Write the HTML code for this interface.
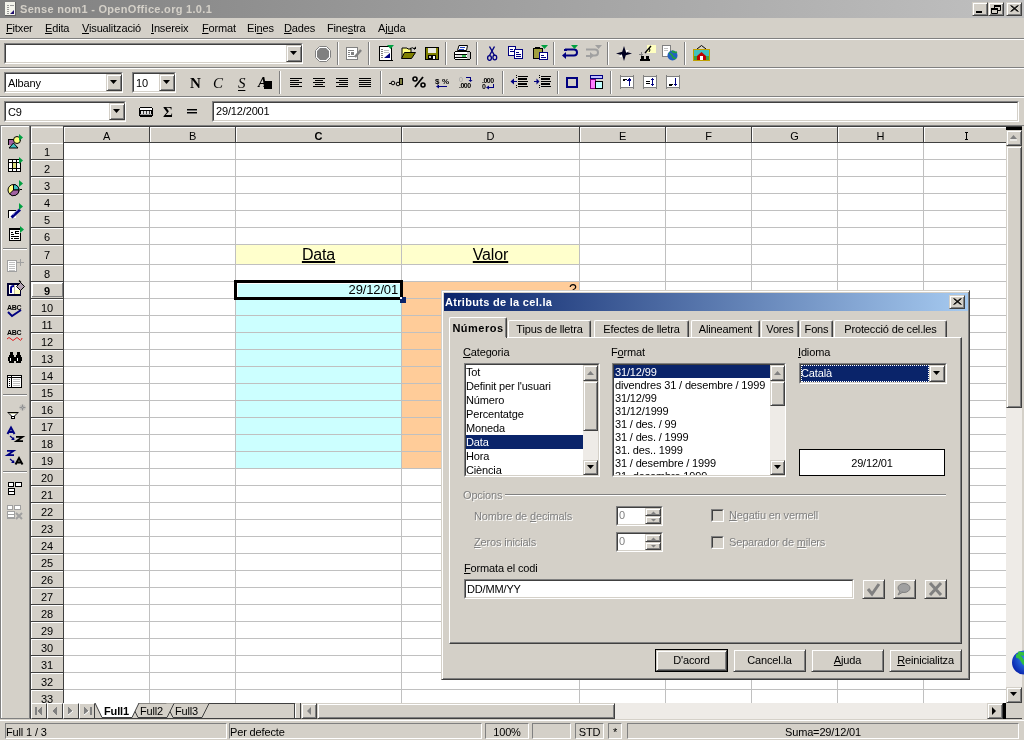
<!DOCTYPE html><html><head><meta charset="utf-8"><style>
*{box-sizing:border-box;margin:0;padding:0}
html,body{width:1024px;height:740px;overflow:hidden;background:#d4d0c8;font-family:"Liberation Sans",sans-serif;font-size:11px;color:#000}
body{position:relative;will-change:transform}
.a{position:absolute}
.t{position:absolute;white-space:nowrap;line-height:13px;letter-spacing:-0.15px}
.ul{text-decoration:underline;text-underline-offset:1px}
.btn{position:absolute;background:#d4d0c8;border-top:1px solid #fff;border-left:1px solid #fff;border-right:1px solid #404040;border-bottom:1px solid #404040;box-shadow:inset -1px -1px 0 #808080}
.btn2{position:absolute;background:#d4d0c8;border-top:1px solid #d4d0c8;border-left:1px solid #d4d0c8;border-right:1px solid #404040;border-bottom:1px solid #404040;box-shadow:inset 1px 1px 0 #fff,inset -1px -1px 0 #808080}
.field{position:absolute;background:#fff;border-top:1px solid #808080;border-left:1px solid #808080;border-right:1px solid #fff;border-bottom:1px solid #fff}
.field>i{position:absolute;left:0;top:0;right:0;bottom:0;border-top:1px solid #404040;border-left:1px solid #404040;border-right:1px solid #d4d0c8;border-bottom:1px solid #d4d0c8}
.tri{position:absolute;width:0;height:0;border-left:4px solid transparent;border-right:4px solid transparent;border-top:4px solid #000}
svg{position:absolute;overflow:visible}
.dis{color:#808080;text-shadow:1px 1px 0 #fff}
</style></head><body><div class="a" style="left:0px;top:0px;width:1024px;height:18px;background:linear-gradient(to right,#808080,#c0c0c0)"></div>
<div class="a" style="left:5px;top:2px;width:11px;height:14px;background:#f4f4ec;border-right:1px solid #606060;border-bottom:1px solid #606060"></div>
<svg style="left:5px;top:2px" width="12" height="15"><g fill="#999"><rect x="2" y="3" width="2" height="1"/><rect x="2" y="5" width="2" height="1"/><rect x="2" y="7" width="2" height="1"/><rect x="2" y="9" width="2" height="1"/><rect x="2" y="11" width="2" height="1"/><rect x="5" y="3" width="4" height="1"/></g><path d="M5 12 L9 8 L9 12Z" fill="#201070"/></svg>
<div class="t" style="left:20px;top:3px;font-weight:bold;color:#d4d0c8;letter-spacing:0.3px">Sense nom1 - OpenOffice.org 1.0.1</div>
<div class="btn2" style="left:972px;top:2px;width:16px;height:14px;"></div>
<div class="btn2" style="left:988px;top:2px;width:16px;height:14px;"></div>
<div class="btn2" style="left:1006px;top:2px;width:16px;height:14px;"></div>
<div class="a" style="left:976px;top:11px;width:6px;height:2px;background:#000"></div>
<svg style="left:988px;top:2px" width="16" height="14"><path d="M6.5 3.5h6v5h-6z M3.5 6.5h6v5h-6z" fill="none" stroke="#000"/><rect x="6" y="3" width="7" height="2" fill="#000"/><rect x="4" y="7" width="5" height="4" fill="#d4d0c8"/><rect x="3" y="6" width="7" height="2" fill="#000"/></svg>
<svg style="left:1006px;top:2px" width="16" height="14"><path d="M4.5 3.5l7 6 M5.5 3.5l7 6 M11.5 3.5l-7 6 M12.5 3.5l-7 6" stroke="#000" stroke-width="1"/></svg>
<div class="t" style="left:6px;top:22px;"><span class="ul">F</span>itxer</div>
<div class="t" style="left:45px;top:22px;"><span class="ul">E</span>dita</div>
<div class="t" style="left:82px;top:22px;"><span class="ul">V</span>isualització</div>
<div class="t" style="left:151px;top:22px;"><span class="ul">I</span>nsereix</div>
<div class="t" style="left:202px;top:22px;"><span class="ul">F</span>ormat</div>
<div class="t" style="left:247px;top:22px;">Ei<span class="ul">n</span>es</div>
<div class="t" style="left:284px;top:22px;"><span class="ul">D</span>ades</div>
<div class="t" style="left:327px;top:22px;">Fine<span class="ul">s</span>tra</div>
<div class="t" style="left:378px;top:22px;">Aj<span class="ul">u</span>da</div>
<div class="a" style="left:0px;top:38px;width:1024px;height:1px;background:#808080"></div>
<div class="a" style="left:0px;top:39px;width:1024px;height:1px;background:#fff"></div>
<div class="field" style="left:4px;top:43px;width:299px;height:21px;background:#fff"><i></i></div>
<div class="btn2" style="left:286px;top:45px;width:16px;height:17px;"></div>
<svg style="left:286px;top:45px" width="16" height="17"><path d="M4 6h7l-3.5 4z" fill="#000"/></svg>
<div class="a" style="left:0px;top:67px;width:1024px;height:1px;background:#808080"></div>
<div class="a" style="left:0px;top:68px;width:1024px;height:1px;background:#fff"></div>
<div class="field" style="left:4px;top:72px;width:119px;height:21px;background:#fff"><i></i></div>
<div class="btn2" style="left:106px;top:74px;width:16px;height:17px;"></div>
<svg style="left:106px;top:74px" width="16" height="17"><path d="M4 6h7l-3.5 4z" fill="#000"/></svg>
<div class="t" style="left:8px;top:77px;">Albany</div>
<div class="field" style="left:132px;top:72px;width:44px;height:21px;background:#fff"><i></i></div>
<div class="btn2" style="left:159px;top:74px;width:16px;height:17px;"></div>
<svg style="left:159px;top:74px" width="16" height="17"><path d="M4 6h7l-3.5 4z" fill="#000"/></svg>
<div class="t" style="left:136px;top:77px;">10</div>
<div class="a" style="left:0px;top:96px;width:1024px;height:1px;background:#808080"></div>
<div class="a" style="left:0px;top:97px;width:1024px;height:1px;background:#fff"></div>
<div class="field" style="left:4px;top:101px;width:122px;height:21px;background:#fff"><i></i></div>
<div class="btn2" style="left:109px;top:103px;width:16px;height:17px;"></div>
<svg style="left:109px;top:103px" width="16" height="17"><path d="M4 6h7l-3.5 4z" fill="#000"/></svg>
<div class="t" style="left:8px;top:106px;">C9</div>
<div class="field" style="left:212px;top:101px;width:807px;height:21px;background:#fff"><i></i></div>
<div class="t" style="left:216px;top:105px;">29/12/2001</div>
<div class="a" style="left:0px;top:125px;width:1024px;height:1px;background:#808080"></div>
<div class="a" style="left:0px;top:126px;width:30px;height:593px;border-left:1px solid #808080;box-shadow:inset 1px 1px 0 #fff;border-right:1px solid #808080;border-bottom:1px solid #808080"></div>
<div class="a" style="left:30px;top:126px;width:976px;height:577px;background:#fff"></div>
<div class="a" style="left:236px;top:245px;width:343px;height:19px;background:#ffffcc"></div>
<div class="a" style="left:236px;top:282px;width:165px;height:186px;background:#ccffff"></div>
<div class="a" style="left:402px;top:282px;width:177px;height:186px;background:#ffcc99"></div>
<div class="a" style="left:64px;top:159px;width:942px;height:1px;background:#c0c0c0"></div>
<div class="a" style="left:64px;top:176px;width:942px;height:1px;background:#c0c0c0"></div>
<div class="a" style="left:64px;top:193px;width:942px;height:1px;background:#c0c0c0"></div>
<div class="a" style="left:64px;top:210px;width:942px;height:1px;background:#c0c0c0"></div>
<div class="a" style="left:64px;top:227px;width:942px;height:1px;background:#c0c0c0"></div>
<div class="a" style="left:64px;top:244px;width:942px;height:1px;background:#c0c0c0"></div>
<div class="a" style="left:64px;top:264px;width:942px;height:1px;background:#c0c0c0"></div>
<div class="a" style="left:64px;top:281px;width:942px;height:1px;background:#c0c0c0"></div>
<div class="a" style="left:64px;top:298px;width:942px;height:1px;background:#c0c0c0"></div>
<div class="a" style="left:64px;top:315px;width:942px;height:1px;background:#c0c0c0"></div>
<div class="a" style="left:64px;top:332px;width:942px;height:1px;background:#c0c0c0"></div>
<div class="a" style="left:64px;top:349px;width:942px;height:1px;background:#c0c0c0"></div>
<div class="a" style="left:64px;top:366px;width:942px;height:1px;background:#c0c0c0"></div>
<div class="a" style="left:64px;top:383px;width:942px;height:1px;background:#c0c0c0"></div>
<div class="a" style="left:64px;top:400px;width:942px;height:1px;background:#c0c0c0"></div>
<div class="a" style="left:64px;top:417px;width:942px;height:1px;background:#c0c0c0"></div>
<div class="a" style="left:64px;top:434px;width:942px;height:1px;background:#c0c0c0"></div>
<div class="a" style="left:64px;top:451px;width:942px;height:1px;background:#c0c0c0"></div>
<div class="a" style="left:64px;top:468px;width:942px;height:1px;background:#c0c0c0"></div>
<div class="a" style="left:64px;top:485px;width:942px;height:1px;background:#c0c0c0"></div>
<div class="a" style="left:64px;top:502px;width:942px;height:1px;background:#c0c0c0"></div>
<div class="a" style="left:64px;top:519px;width:942px;height:1px;background:#c0c0c0"></div>
<div class="a" style="left:64px;top:536px;width:942px;height:1px;background:#c0c0c0"></div>
<div class="a" style="left:64px;top:553px;width:942px;height:1px;background:#c0c0c0"></div>
<div class="a" style="left:64px;top:570px;width:942px;height:1px;background:#c0c0c0"></div>
<div class="a" style="left:64px;top:587px;width:942px;height:1px;background:#c0c0c0"></div>
<div class="a" style="left:64px;top:604px;width:942px;height:1px;background:#c0c0c0"></div>
<div class="a" style="left:64px;top:621px;width:942px;height:1px;background:#c0c0c0"></div>
<div class="a" style="left:64px;top:638px;width:942px;height:1px;background:#c0c0c0"></div>
<div class="a" style="left:64px;top:655px;width:942px;height:1px;background:#c0c0c0"></div>
<div class="a" style="left:64px;top:672px;width:942px;height:1px;background:#c0c0c0"></div>
<div class="a" style="left:64px;top:689px;width:942px;height:1px;background:#c0c0c0"></div>
<div class="a" style="left:149px;top:143px;width:1px;height:560px;background:#c0c0c0"></div>
<div class="a" style="left:235px;top:143px;width:1px;height:560px;background:#c0c0c0"></div>
<div class="a" style="left:401px;top:143px;width:1px;height:560px;background:#c0c0c0"></div>
<div class="a" style="left:579px;top:143px;width:1px;height:560px;background:#c0c0c0"></div>
<div class="a" style="left:665px;top:143px;width:1px;height:560px;background:#c0c0c0"></div>
<div class="a" style="left:751px;top:143px;width:1px;height:560px;background:#c0c0c0"></div>
<div class="a" style="left:837px;top:143px;width:1px;height:560px;background:#c0c0c0"></div>
<div class="a" style="left:923px;top:143px;width:1px;height:560px;background:#c0c0c0"></div>
<div class="a" style="left:30px;top:126px;width:976px;height:17px;background:#d4d0c8"></div>
<div class="a" style="left:30px;top:126px;width:992px;height:1px;background:#404040"></div>
<div class="a" style="left:30px;top:142px;width:976px;height:1px;background:#404040"></div>
<div class="a" style="left:30px;top:126px;width:34px;height:577px;background:#d4d0c8"></div>
<div class="a" style="left:30px;top:126px;width:1px;height:577px;background:#404040"></div>
<div class="a" style="left:63px;top:126px;width:1px;height:577px;background:#404040"></div>
<div class="a" style="left:31px;top:127px;width:32px;height:1px;background:#fff"></div>
<div class="a" style="left:31px;top:127px;width:1px;height:15px;background:#fff"></div>
<div class="a" style="left:64px;top:127px;width:85px;height:1px;background:#fff"></div>
<div class="a" style="left:64px;top:127px;width:1px;height:15px;background:#fff"></div>
<div class="a" style="left:149px;top:126px;width:1px;height:17px;background:#404040"></div>
<div class="t" style="left:64px;top:130px;width:85px;text-align:center">A</div>
<div class="a" style="left:150px;top:127px;width:85px;height:1px;background:#fff"></div>
<div class="a" style="left:150px;top:127px;width:1px;height:15px;background:#fff"></div>
<div class="a" style="left:235px;top:126px;width:1px;height:17px;background:#404040"></div>
<div class="t" style="left:150px;top:130px;width:85px;text-align:center">B</div>
<div class="a" style="left:236px;top:127px;width:165px;height:1px;background:#fff"></div>
<div class="a" style="left:236px;top:127px;width:1px;height:15px;background:#fff"></div>
<div class="a" style="left:401px;top:126px;width:1px;height:17px;background:#404040"></div>
<div class="t" style="left:236px;top:130px;width:165px;text-align:center;font-weight:bold">C</div>
<div class="a" style="left:402px;top:127px;width:177px;height:1px;background:#fff"></div>
<div class="a" style="left:402px;top:127px;width:1px;height:15px;background:#fff"></div>
<div class="a" style="left:579px;top:126px;width:1px;height:17px;background:#404040"></div>
<div class="t" style="left:402px;top:130px;width:177px;text-align:center">D</div>
<div class="a" style="left:580px;top:127px;width:85px;height:1px;background:#fff"></div>
<div class="a" style="left:580px;top:127px;width:1px;height:15px;background:#fff"></div>
<div class="a" style="left:665px;top:126px;width:1px;height:17px;background:#404040"></div>
<div class="t" style="left:580px;top:130px;width:85px;text-align:center">E</div>
<div class="a" style="left:666px;top:127px;width:85px;height:1px;background:#fff"></div>
<div class="a" style="left:666px;top:127px;width:1px;height:15px;background:#fff"></div>
<div class="a" style="left:751px;top:126px;width:1px;height:17px;background:#404040"></div>
<div class="t" style="left:666px;top:130px;width:85px;text-align:center">F</div>
<div class="a" style="left:752px;top:127px;width:85px;height:1px;background:#fff"></div>
<div class="a" style="left:752px;top:127px;width:1px;height:15px;background:#fff"></div>
<div class="a" style="left:837px;top:126px;width:1px;height:17px;background:#404040"></div>
<div class="t" style="left:752px;top:130px;width:85px;text-align:center">G</div>
<div class="a" style="left:838px;top:127px;width:85px;height:1px;background:#fff"></div>
<div class="a" style="left:838px;top:127px;width:1px;height:15px;background:#fff"></div>
<div class="a" style="left:923px;top:126px;width:1px;height:17px;background:#404040"></div>
<div class="t" style="left:838px;top:130px;width:85px;text-align:center">H</div>
<div class="a" style="left:924px;top:127px;width:82px;height:1px;background:#fff"></div>
<div class="a" style="left:924px;top:127px;width:1px;height:15px;background:#fff"></div>
<div class="a" style="left:965px;top:132px;width:3px;height:1px;background:#000"></div>
<div class="a" style="left:966px;top:133px;width:1px;height:6px;background:#000"></div>
<div class="a" style="left:965px;top:139px;width:3px;height:1px;background:#000"></div>
<div class="a" style="left:31px;top:143px;width:32px;height:1px;background:#fff"></div>
<div class="a" style="left:31px;top:143px;width:1px;height:16px;background:#fff"></div>
<div class="a" style="left:30px;top:159px;width:34px;height:1px;background:#404040"></div>
<div class="t" style="left:31px;top:146px;width:32px;text-align:center">1</div>
<div class="a" style="left:31px;top:160px;width:32px;height:1px;background:#fff"></div>
<div class="a" style="left:31px;top:160px;width:1px;height:16px;background:#fff"></div>
<div class="a" style="left:30px;top:176px;width:34px;height:1px;background:#404040"></div>
<div class="t" style="left:31px;top:163px;width:32px;text-align:center">2</div>
<div class="a" style="left:31px;top:177px;width:32px;height:1px;background:#fff"></div>
<div class="a" style="left:31px;top:177px;width:1px;height:16px;background:#fff"></div>
<div class="a" style="left:30px;top:193px;width:34px;height:1px;background:#404040"></div>
<div class="t" style="left:31px;top:180px;width:32px;text-align:center">3</div>
<div class="a" style="left:31px;top:194px;width:32px;height:1px;background:#fff"></div>
<div class="a" style="left:31px;top:194px;width:1px;height:16px;background:#fff"></div>
<div class="a" style="left:30px;top:210px;width:34px;height:1px;background:#404040"></div>
<div class="t" style="left:31px;top:197px;width:32px;text-align:center">4</div>
<div class="a" style="left:31px;top:211px;width:32px;height:1px;background:#fff"></div>
<div class="a" style="left:31px;top:211px;width:1px;height:16px;background:#fff"></div>
<div class="a" style="left:30px;top:227px;width:34px;height:1px;background:#404040"></div>
<div class="t" style="left:31px;top:214px;width:32px;text-align:center">5</div>
<div class="a" style="left:31px;top:228px;width:32px;height:1px;background:#fff"></div>
<div class="a" style="left:31px;top:228px;width:1px;height:16px;background:#fff"></div>
<div class="a" style="left:30px;top:244px;width:34px;height:1px;background:#404040"></div>
<div class="t" style="left:31px;top:231px;width:32px;text-align:center">6</div>
<div class="a" style="left:31px;top:245px;width:32px;height:1px;background:#fff"></div>
<div class="a" style="left:31px;top:245px;width:1px;height:19px;background:#fff"></div>
<div class="a" style="left:30px;top:264px;width:34px;height:1px;background:#404040"></div>
<div class="t" style="left:31px;top:249px;width:32px;text-align:center">7</div>
<div class="a" style="left:31px;top:265px;width:32px;height:1px;background:#fff"></div>
<div class="a" style="left:31px;top:265px;width:1px;height:16px;background:#fff"></div>
<div class="a" style="left:30px;top:281px;width:34px;height:1px;background:#404040"></div>
<div class="t" style="left:31px;top:268px;width:32px;text-align:center">8</div>
<div class="a" style="left:31px;top:282px;width:32px;height:1px;background:#fff"></div>
<div class="a" style="left:31px;top:282px;width:1px;height:16px;background:#fff"></div>
<div class="a" style="left:30px;top:298px;width:34px;height:1px;background:#404040"></div>
<div class="t" style="left:31px;top:285px;width:32px;text-align:center;font-weight:bold">9</div>
<div class="a" style="left:31px;top:299px;width:32px;height:1px;background:#fff"></div>
<div class="a" style="left:31px;top:299px;width:1px;height:16px;background:#fff"></div>
<div class="a" style="left:30px;top:315px;width:34px;height:1px;background:#404040"></div>
<div class="t" style="left:31px;top:302px;width:32px;text-align:center">10</div>
<div class="a" style="left:31px;top:316px;width:32px;height:1px;background:#fff"></div>
<div class="a" style="left:31px;top:316px;width:1px;height:16px;background:#fff"></div>
<div class="a" style="left:30px;top:332px;width:34px;height:1px;background:#404040"></div>
<div class="t" style="left:31px;top:319px;width:32px;text-align:center">11</div>
<div class="a" style="left:31px;top:333px;width:32px;height:1px;background:#fff"></div>
<div class="a" style="left:31px;top:333px;width:1px;height:16px;background:#fff"></div>
<div class="a" style="left:30px;top:349px;width:34px;height:1px;background:#404040"></div>
<div class="t" style="left:31px;top:336px;width:32px;text-align:center">12</div>
<div class="a" style="left:31px;top:350px;width:32px;height:1px;background:#fff"></div>
<div class="a" style="left:31px;top:350px;width:1px;height:16px;background:#fff"></div>
<div class="a" style="left:30px;top:366px;width:34px;height:1px;background:#404040"></div>
<div class="t" style="left:31px;top:353px;width:32px;text-align:center">13</div>
<div class="a" style="left:31px;top:367px;width:32px;height:1px;background:#fff"></div>
<div class="a" style="left:31px;top:367px;width:1px;height:16px;background:#fff"></div>
<div class="a" style="left:30px;top:383px;width:34px;height:1px;background:#404040"></div>
<div class="t" style="left:31px;top:370px;width:32px;text-align:center">14</div>
<div class="a" style="left:31px;top:384px;width:32px;height:1px;background:#fff"></div>
<div class="a" style="left:31px;top:384px;width:1px;height:16px;background:#fff"></div>
<div class="a" style="left:30px;top:400px;width:34px;height:1px;background:#404040"></div>
<div class="t" style="left:31px;top:387px;width:32px;text-align:center">15</div>
<div class="a" style="left:31px;top:401px;width:32px;height:1px;background:#fff"></div>
<div class="a" style="left:31px;top:401px;width:1px;height:16px;background:#fff"></div>
<div class="a" style="left:30px;top:417px;width:34px;height:1px;background:#404040"></div>
<div class="t" style="left:31px;top:404px;width:32px;text-align:center">16</div>
<div class="a" style="left:31px;top:418px;width:32px;height:1px;background:#fff"></div>
<div class="a" style="left:31px;top:418px;width:1px;height:16px;background:#fff"></div>
<div class="a" style="left:30px;top:434px;width:34px;height:1px;background:#404040"></div>
<div class="t" style="left:31px;top:421px;width:32px;text-align:center">17</div>
<div class="a" style="left:31px;top:435px;width:32px;height:1px;background:#fff"></div>
<div class="a" style="left:31px;top:435px;width:1px;height:16px;background:#fff"></div>
<div class="a" style="left:30px;top:451px;width:34px;height:1px;background:#404040"></div>
<div class="t" style="left:31px;top:438px;width:32px;text-align:center">18</div>
<div class="a" style="left:31px;top:452px;width:32px;height:1px;background:#fff"></div>
<div class="a" style="left:31px;top:452px;width:1px;height:16px;background:#fff"></div>
<div class="a" style="left:30px;top:468px;width:34px;height:1px;background:#404040"></div>
<div class="t" style="left:31px;top:455px;width:32px;text-align:center">19</div>
<div class="a" style="left:31px;top:469px;width:32px;height:1px;background:#fff"></div>
<div class="a" style="left:31px;top:469px;width:1px;height:16px;background:#fff"></div>
<div class="a" style="left:30px;top:485px;width:34px;height:1px;background:#404040"></div>
<div class="t" style="left:31px;top:472px;width:32px;text-align:center">20</div>
<div class="a" style="left:31px;top:486px;width:32px;height:1px;background:#fff"></div>
<div class="a" style="left:31px;top:486px;width:1px;height:16px;background:#fff"></div>
<div class="a" style="left:30px;top:502px;width:34px;height:1px;background:#404040"></div>
<div class="t" style="left:31px;top:489px;width:32px;text-align:center">21</div>
<div class="a" style="left:31px;top:503px;width:32px;height:1px;background:#fff"></div>
<div class="a" style="left:31px;top:503px;width:1px;height:16px;background:#fff"></div>
<div class="a" style="left:30px;top:519px;width:34px;height:1px;background:#404040"></div>
<div class="t" style="left:31px;top:506px;width:32px;text-align:center">22</div>
<div class="a" style="left:31px;top:520px;width:32px;height:1px;background:#fff"></div>
<div class="a" style="left:31px;top:520px;width:1px;height:16px;background:#fff"></div>
<div class="a" style="left:30px;top:536px;width:34px;height:1px;background:#404040"></div>
<div class="t" style="left:31px;top:523px;width:32px;text-align:center">23</div>
<div class="a" style="left:31px;top:537px;width:32px;height:1px;background:#fff"></div>
<div class="a" style="left:31px;top:537px;width:1px;height:16px;background:#fff"></div>
<div class="a" style="left:30px;top:553px;width:34px;height:1px;background:#404040"></div>
<div class="t" style="left:31px;top:540px;width:32px;text-align:center">24</div>
<div class="a" style="left:31px;top:554px;width:32px;height:1px;background:#fff"></div>
<div class="a" style="left:31px;top:554px;width:1px;height:16px;background:#fff"></div>
<div class="a" style="left:30px;top:570px;width:34px;height:1px;background:#404040"></div>
<div class="t" style="left:31px;top:557px;width:32px;text-align:center">25</div>
<div class="a" style="left:31px;top:571px;width:32px;height:1px;background:#fff"></div>
<div class="a" style="left:31px;top:571px;width:1px;height:16px;background:#fff"></div>
<div class="a" style="left:30px;top:587px;width:34px;height:1px;background:#404040"></div>
<div class="t" style="left:31px;top:574px;width:32px;text-align:center">26</div>
<div class="a" style="left:31px;top:588px;width:32px;height:1px;background:#fff"></div>
<div class="a" style="left:31px;top:588px;width:1px;height:16px;background:#fff"></div>
<div class="a" style="left:30px;top:604px;width:34px;height:1px;background:#404040"></div>
<div class="t" style="left:31px;top:591px;width:32px;text-align:center">27</div>
<div class="a" style="left:31px;top:605px;width:32px;height:1px;background:#fff"></div>
<div class="a" style="left:31px;top:605px;width:1px;height:16px;background:#fff"></div>
<div class="a" style="left:30px;top:621px;width:34px;height:1px;background:#404040"></div>
<div class="t" style="left:31px;top:608px;width:32px;text-align:center">28</div>
<div class="a" style="left:31px;top:622px;width:32px;height:1px;background:#fff"></div>
<div class="a" style="left:31px;top:622px;width:1px;height:16px;background:#fff"></div>
<div class="a" style="left:30px;top:638px;width:34px;height:1px;background:#404040"></div>
<div class="t" style="left:31px;top:625px;width:32px;text-align:center">29</div>
<div class="a" style="left:31px;top:639px;width:32px;height:1px;background:#fff"></div>
<div class="a" style="left:31px;top:639px;width:1px;height:16px;background:#fff"></div>
<div class="a" style="left:30px;top:655px;width:34px;height:1px;background:#404040"></div>
<div class="t" style="left:31px;top:642px;width:32px;text-align:center">30</div>
<div class="a" style="left:31px;top:656px;width:32px;height:1px;background:#fff"></div>
<div class="a" style="left:31px;top:656px;width:1px;height:16px;background:#fff"></div>
<div class="a" style="left:30px;top:672px;width:34px;height:1px;background:#404040"></div>
<div class="t" style="left:31px;top:659px;width:32px;text-align:center">31</div>
<div class="a" style="left:31px;top:673px;width:32px;height:1px;background:#fff"></div>
<div class="a" style="left:31px;top:673px;width:1px;height:16px;background:#fff"></div>
<div class="a" style="left:30px;top:689px;width:34px;height:1px;background:#404040"></div>
<div class="t" style="left:31px;top:676px;width:32px;text-align:center">32</div>
<div class="a" style="left:31px;top:690px;width:32px;height:1px;background:#fff"></div>
<div class="a" style="left:31px;top:690px;width:1px;height:13px;background:#fff"></div>
<div class="t" style="left:31px;top:693px;width:32px;text-align:center">33</div>
<div class="a" style="left:32px;top:283px;width:30px;height:1px;background:#fff"></div>
<div class="a" style="left:32px;top:283px;width:1px;height:14px;background:#fff"></div>
<div class="a" style="left:32px;top:296px;width:30px;height:1px;background:#808080"></div>
<div class="a" style="left:62px;top:283px;width:1px;height:14px;background:#808080"></div>
<div class="t" style="left:236px;top:247px;width:165px;text-align:center;font-size:16px;line-height:16px"><span style="text-decoration:underline;text-decoration-thickness:2px;text-underline-offset:1px">Data</span></div>
<div class="t" style="left:402px;top:247px;width:177px;text-align:center;font-size:16px;line-height:16px"><span style="text-decoration:underline;text-decoration-thickness:2px;text-underline-offset:1px">Valor</span></div>
<div class="t" style="left:237px;top:282px;width:161px;text-align:right;font-size:13px;line-height:15px">29/12/01</div>
<div class="t" style="left:569px;top:282px;font-size:14px;line-height:15px">?</div>
<div class="a" style="left:234px;top:280px;width:169px;height:20px;border:3px solid #000;box-shadow:inset 1px 1px 0 #fff"></div>
<div class="a" style="left:400px;top:297px;width:6px;height:6px;background:#0a246a"></div>
<div class="a" style="left:400px;top:297px;width:2px;height:2px;background:#fff"></div>
<div class="a" style="left:1006px;top:126px;width:16px;height:577px;background:#eeebe7"></div>
<div class="a" style="left:1006px;top:126px;width:16px;height:1px;background:#404040"></div>
<div class="a" style="left:1006px;top:127px;width:16px;height:3px;background:#000"></div>
<div class="btn2" style="left:1006px;top:130px;width:16px;height:16px;"></div>
<svg style="left:1006px;top:130px" width="16" height="16"><path d="M4 9h7l-3.5-4z" fill="#808080"/><path d="M4 10h7" stroke="#fff"/></svg>
<div class="btn2" style="left:1006px;top:146px;width:16px;height:262px;"></div>
<div class="btn2" style="left:1006px;top:687px;width:16px;height:16px;"></div>
<svg style="left:1006px;top:687px" width="16" height="16"><path d="M4 5h7l-3.5 4z" fill="#000"/></svg>
<div class="a" style="left:30px;top:703px;width:992px;height:16px;background:#d4d0c8"></div>
<div class="a" style="left:30px;top:703px;width:265px;height:1px;background:#404040"></div>
<div class="a" style="left:30px;top:718px;width:992px;height:1px;background:#404040"></div>
<div class="a" style="left:31px;top:703px;width:16px;height:16px;background:#d4d0c8;border-top:1px solid #fff;border-left:1px solid #fff;border-right:1px solid #404040;border-bottom:1px solid #404040"></div>
<div class="a" style="left:47px;top:703px;width:16px;height:16px;background:#d4d0c8;border-top:1px solid #fff;border-left:1px solid #fff;border-right:1px solid #404040;border-bottom:1px solid #404040"></div>
<div class="a" style="left:63px;top:703px;width:16px;height:16px;background:#d4d0c8;border-top:1px solid #fff;border-left:1px solid #fff;border-right:1px solid #404040;border-bottom:1px solid #404040"></div>
<div class="a" style="left:79px;top:703px;width:16px;height:16px;background:#d4d0c8;border-top:1px solid #fff;border-left:1px solid #fff;border-right:1px solid #404040;border-bottom:1px solid #404040"></div>
<div class="a" style="left:30px;top:703px;width:1px;height:16px;background:#404040"></div>
<div class="a" style="left:294px;top:703px;width:1px;height:16px;background:#404040"></div>
<div class="a" style="left:295px;top:704px;width:1px;height:14px;background:#fff"></div>
<div class="a" style="left:300px;top:703px;width:1px;height:16px;background:#404040"></div>
<div class="btn2" style="left:301px;top:703px;width:16px;height:16px;"></div>
<div class="a" style="left:317px;top:703px;width:686px;height:16px;background:#eeebe7"></div>
<div class="btn2" style="left:317px;top:703px;width:298px;height:16px;"></div>
<div class="btn2" style="left:987px;top:703px;width:16px;height:16px;"></div>
<svg style="left:987px;top:703px" width="16" height="16"><path d="M5 4v8l4-4z" fill="#000"/></svg>
<div class="btn2" style="left:301px;top:703px;width:16px;height:16px;"></div>
<svg style="left:301px;top:703px" width="16" height="16"><path d="M10 4v8l-4-4z" fill="#808080"/></svg>
<div class="a" style="left:1003px;top:703px;width:3px;height:16px;background:#000"></div>
<div class="a" style="left:0px;top:720px;width:1024px;height:1px;background:#fff"></div>
<div class="a" style="left:5px;top:723px;width:222px;height:16px;border-top:1px solid #808080;border-left:1px solid #808080;border-right:1px solid #fff;border-bottom:1px solid #fff"></div>
<div class="t" style="left:6px;top:726px;width:220px;text-align:left">Full 1 / 3</div>
<div class="a" style="left:229px;top:723px;width:253px;height:16px;border-top:1px solid #808080;border-left:1px solid #808080;border-right:1px solid #fff;border-bottom:1px solid #fff"></div>
<div class="t" style="left:230px;top:726px;width:251px;text-align:left">Per defecte</div>
<div class="a" style="left:485px;top:723px;width:44px;height:16px;border-top:1px solid #808080;border-left:1px solid #808080;border-right:1px solid #fff;border-bottom:1px solid #fff"></div>
<div class="t" style="left:486px;top:726px;width:42px;text-align:center">100%</div>
<div class="a" style="left:532px;top:723px;width:39px;height:16px;border-top:1px solid #808080;border-left:1px solid #808080;border-right:1px solid #fff;border-bottom:1px solid #fff"></div>
<div class="a" style="left:575px;top:723px;width:29px;height:16px;border-top:1px solid #808080;border-left:1px solid #808080;border-right:1px solid #fff;border-bottom:1px solid #fff"></div>
<div class="t" style="left:576px;top:726px;width:27px;text-align:center">STD</div>
<div class="a" style="left:608px;top:723px;width:14px;height:16px;border-top:1px solid #808080;border-left:1px solid #808080;border-right:1px solid #fff;border-bottom:1px solid #fff"></div>
<div class="t" style="left:609px;top:726px;width:12px;text-align:center">*</div>
<div class="a" style="left:627px;top:723px;width:392px;height:16px;border-top:1px solid #808080;border-left:1px solid #808080;border-right:1px solid #fff;border-bottom:1px solid #fff"></div>
<div class="t" style="left:628px;top:726px;width:390px;text-align:center">Suma=29/12/01</div>
<div class="a" style="left:441px;top:290px;width:529px;height:390px;background:#d4d0c8;border-top:1px solid #d4d0c8;border-left:1px solid #d4d0c8;border-right:1px solid #404040;border-bottom:1px solid #404040;box-shadow:inset 1px 1px 0 #fff,inset -1px -1px 0 #808080"></div>
<div class="a" style="left:444px;top:293px;width:524px;height:18px;background:linear-gradient(to right,#0a246a,#a6caf0)"></div>
<div class="t" style="left:445px;top:296px;font-weight:bold;color:#fff;letter-spacing:0.3px">Atributs de la cel.la</div>
<div class="btn2" style="left:949px;top:295px;width:16px;height:14px;"></div>
<svg style="left:949px;top:295px" width="16" height="14"><path d="M4.5 3.5l7 6 M5.5 3.5l7 6 M11.5 3.5l-7 6 M12.5 3.5l-7 6" stroke="#000" stroke-width="1"/></svg>
<div class="a" style="left:449px;top:337px;width:513px;height:307px;border-top:1px solid #fff;border-left:1px solid #fff;border-right:1px solid #404040;border-bottom:1px solid #404040;box-shadow:inset -1px -1px 0 #808080"></div>
<div class="a" style="left:508px;top:320px;width:83px;height:17px;background:#d4d0c8;border-top:1px solid #fff;border-left:1px solid #fff;border-right:1px solid #404040;box-shadow:inset -1px 0 0 #808080;border-top-left-radius:2px;border-top-right-radius:2px"></div>
<div class="t" style="left:509px;top:323px;width:81px;text-align:center;">Tipus de lletra</div>
<div class="a" style="left:594px;top:320px;width:95px;height:17px;background:#d4d0c8;border-top:1px solid #fff;border-left:1px solid #fff;border-right:1px solid #404040;box-shadow:inset -1px 0 0 #808080;border-top-left-radius:2px;border-top-right-radius:2px"></div>
<div class="t" style="left:595px;top:323px;width:93px;text-align:center;">Efectes de lletra</div>
<div class="a" style="left:691px;top:320px;width:69px;height:17px;background:#d4d0c8;border-top:1px solid #fff;border-left:1px solid #fff;border-right:1px solid #404040;box-shadow:inset -1px 0 0 #808080;border-top-left-radius:2px;border-top-right-radius:2px"></div>
<div class="t" style="left:692px;top:323px;width:67px;text-align:center;">Alineament</div>
<div class="a" style="left:761px;top:320px;width:38px;height:17px;background:#d4d0c8;border-top:1px solid #fff;border-left:1px solid #fff;border-right:1px solid #404040;box-shadow:inset -1px 0 0 #808080;border-top-left-radius:2px;border-top-right-radius:2px"></div>
<div class="t" style="left:762px;top:323px;width:36px;text-align:center;">Vores</div>
<div class="a" style="left:800px;top:320px;width:33px;height:17px;background:#d4d0c8;border-top:1px solid #fff;border-left:1px solid #fff;border-right:1px solid #404040;box-shadow:inset -1px 0 0 #808080;border-top-left-radius:2px;border-top-right-radius:2px"></div>
<div class="t" style="left:801px;top:323px;width:31px;text-align:center;">Fons</div>
<div class="a" style="left:834px;top:320px;width:113px;height:17px;background:#d4d0c8;border-top:1px solid #fff;border-left:1px solid #fff;border-right:1px solid #404040;box-shadow:inset -1px 0 0 #808080;border-top-left-radius:2px;border-top-right-radius:2px"></div>
<div class="t" style="left:835px;top:323px;width:111px;text-align:center;">Protecció de cel.les</div>
<div class="a" style="left:449px;top:317px;width:58px;height:21px;background:#d4d0c8;border-top:1px solid #fff;border-left:1px solid #fff;border-right:1px solid #404040;box-shadow:inset -1px 0 0 #808080;border-top-left-radius:2px;border-top-right-radius:2px"></div>
<div class="a" style="left:450px;top:337px;width:56px;height:1px;background:#d4d0c8"></div>
<div class="t" style="left:450px;top:322px;width:56px;text-align:center;font-weight:bold;letter-spacing:0.5px">Números</div>
<div class="t" style="left:463px;top:346px;"><span class="ul">C</span>ategoria</div>
<div class="t" style="left:611px;top:346px;">F<span class="ul">o</span>rmat</div>
<div class="t" style="left:798px;top:346px;"><span class="ul">I</span>dioma</div>
<div class="field" style="left:464px;top:363px;width:136px;height:114px;background:#fff"><i></i></div>
<div class="t" style="left:466px;top:366px;">Tot</div>
<div class="t" style="left:466px;top:380px;">Definit per l'usuari</div>
<div class="t" style="left:466px;top:394px;">Número</div>
<div class="t" style="left:466px;top:408px;">Percentatge</div>
<div class="t" style="left:466px;top:422px;">Moneda</div>
<div class="a" style="left:466px;top:435px;width:117px;height:14px;background:#0a246a"></div>
<div class="t" style="left:466px;top:436px;color:#fff">Data</div>
<div class="t" style="left:466px;top:450px;">Hora</div>
<div class="t" style="left:466px;top:464px;">Ciència</div>
<div class="a" style="left:583px;top:365px;width:15px;height:110px;background:#eeebe7"></div>
<div class="btn2" style="left:583px;top:365px;width:15px;height:16px;"></div>
<svg style="left:583px;top:365px" width="15" height="16"><path d="M4 10h7l-3.5-4z" fill="#808080"/></svg>
<div class="btn2" style="left:583px;top:381px;width:15px;height:50px;"></div>
<div class="btn2" style="left:583px;top:460px;width:15px;height:15px;"></div>
<svg style="left:583px;top:460px" width="15" height="15"><path d="M4 5h7l-3.5 4z" fill="#000"/></svg>
<div class="field" style="left:612px;top:363px;width:174px;height:114px;background:#fff"><i></i></div>
<div class="a" style="left:614px;top:365px;width:156px;height:110px;overflow:hidden">
<div class="a" style="left:0px;top:0px;width:156px;height:13px;background:#0a246a"></div>
<div class="t" style="left:1px;top:1px;color:#fff">31/12/99</div>
<div class="t" style="left:1px;top:14px;">divendres 31 / desembre / 1999</div>
<div class="t" style="left:1px;top:27px;">31/12/99</div>
<div class="t" style="left:1px;top:40px;">31/12/1999</div>
<div class="t" style="left:1px;top:53px;">31 / des. / 99</div>
<div class="t" style="left:1px;top:66px;">31 / des. / 1999</div>
<div class="t" style="left:1px;top:79px;">31. des.. 1999</div>
<div class="t" style="left:1px;top:92px;">31 / desembre / 1999</div>
<div class="t" style="left:1px;top:105px;">31. desembre 1999</div>
</div>
<div class="a" style="left:770px;top:365px;width:15px;height:110px;background:#eeebe7"></div>
<div class="btn2" style="left:770px;top:365px;width:15px;height:16px;"></div>
<svg style="left:770px;top:365px" width="15" height="16"><path d="M4 10h7l-3.5-4z" fill="#808080"/></svg>
<div class="btn2" style="left:770px;top:381px;width:15px;height:25px;"></div>
<div class="btn2" style="left:770px;top:460px;width:15px;height:15px;"></div>
<svg style="left:770px;top:460px" width="15" height="15"><path d="M4 5h7l-3.5 4z" fill="#000"/></svg>
<div class="field" style="left:799px;top:363px;width:148px;height:21px;background:#fff"><i></i></div>
<div class="a" style="left:801px;top:365px;width:128px;height:17px;background:#0a246a;outline:1px dotted #fff;outline-offset:-1px"></div>
<div class="t" style="left:801px;top:367px;color:#fff">Català</div>
<div class="btn2" style="left:929px;top:365px;width:16px;height:17px;"></div>
<svg style="left:929px;top:365px" width="16" height="17"><path d="M4 6h7l-3.5 4z" fill="#000"/></svg>
<div class="a" style="left:799px;top:449px;width:146px;height:27px;background:#fff;border:1px solid #000"></div>
<div class="t" style="left:800px;top:457px;width:144px;text-align:center">29/12/01</div>
<div class="t" style="left:463px;top:489px;color:#808080;text-shadow:1px 1px 0 #fff">Opcions</div>
<div class="a" style="left:505px;top:494px;width:441px;height:1px;background:#808080"></div>
<div class="a" style="left:505px;top:495px;width:441px;height:1px;background:#fff"></div>
<div class="t" style="left:474px;top:510px;color:#808080;text-shadow:1px 1px 0 #fff">Nombre de <span class="ul">d</span>ecimals</div>
<div class="t" style="left:474px;top:536px;color:#808080;text-shadow:1px 1px 0 #fff"><span class="ul">Z</span>eros inicials</div>
<div class="field" style="left:616px;top:506px;width:47px;height:20px;background:#fff"><i></i></div>
<div class="t" style="left:619px;top:509px;color:#808080">0</div>
<div class="btn2" style="left:645px;top:508px;width:16px;height:8px;"></div>
<div class="btn2" style="left:645px;top:516px;width:16px;height:8px;"></div>
<svg style="left:645px;top:508px" width="16" height="16"><path d="M6 6h5l-2.5-2.5z M6 11h5l-2.5 2.5z" fill="#808080"/></svg>
<div class="field" style="left:616px;top:532px;width:47px;height:20px;background:#fff"><i></i></div>
<div class="t" style="left:619px;top:535px;color:#808080">0</div>
<div class="btn2" style="left:645px;top:534px;width:16px;height:8px;"></div>
<div class="btn2" style="left:645px;top:542px;width:16px;height:8px;"></div>
<svg style="left:645px;top:534px" width="16" height="16"><path d="M6 6h5l-2.5-2.5z M6 11h5l-2.5 2.5z" fill="#808080"/></svg>
<div class="field" style="left:711px;top:509px;width:13px;height:13px;background:#d4d0c8"><i></i></div>
<div class="t" style="left:729px;top:509px;color:#808080;text-shadow:1px 1px 0 #fff"><span class="ul">N</span>egatiu en vermell</div>
<div class="field" style="left:711px;top:536px;width:13px;height:13px;background:#d4d0c8"><i></i></div>
<div class="t" style="left:729px;top:536px;color:#808080;text-shadow:1px 1px 0 #fff">Separador de <span class="ul">m</span>ilers</div>
<div class="t" style="left:464px;top:562px;"><span class="ul">F</span>ormata el codi</div>
<div class="field" style="left:464px;top:579px;width:390px;height:20px;background:#fff"><i></i></div>
<div class="t" style="left:467px;top:583px;">DD/MM/YY</div>
<div class="btn2" style="left:862px;top:579px;width:23px;height:20px;"></div>
<div class="btn2" style="left:893px;top:579px;width:23px;height:20px;"></div>
<div class="btn2" style="left:924px;top:579px;width:23px;height:20px;"></div>
<svg style="left:862px;top:579px" width="23" height="20"><path d="M6 10l4 5 7-10" stroke="#808080" stroke-width="3" fill="none"/></svg>
<svg style="left:893px;top:579px" width="23" height="20"><ellipse cx="11" cy="9" rx="6" ry="4.5" fill="#a0a0a0" stroke="#808080"/><path d="M7 12l-2 4 5-3" fill="#a0a0a0" stroke="#808080"/></svg>
<svg style="left:924px;top:579px" width="23" height="20"><path d="M6 4l11 12 M17 4l-11 12" stroke="#808080" stroke-width="3"/></svg>
<div class="a" style="left:655px;top:649px;width:73px;height:23px;border:1px solid #000"></div>
<div class="btn2" style="left:656px;top:650px;width:71px;height:21px;"></div>
<div class="t" style="left:657px;top:654px;width:69px;text-align:center">D'acord</div>
<div class="btn2" style="left:733px;top:649px;width:73px;height:23px;"></div>
<div class="t" style="left:734px;top:654px;width:71px;text-align:center">Cancel.la</div>
<div class="btn2" style="left:811px;top:649px;width:73px;height:23px;"></div>
<div class="t" style="left:812px;top:654px;width:71px;text-align:center"><span class="ul">A</span>juda</div>
<div class="btn2" style="left:889px;top:649px;width:73px;height:23px;"></div>
<div class="t" style="left:890px;top:654px;width:71px;text-align:center"><span class="ul">R</span>einicialitza</div>
<div class="a" style="left:337px;top:42px;width:1px;height:23px;background:#808080"></div>
<div class="a" style="left:338px;top:42px;width:1px;height:23px;background:#fff"></div>
<div class="a" style="left:368px;top:42px;width:1px;height:23px;background:#808080"></div>
<div class="a" style="left:369px;top:42px;width:1px;height:23px;background:#fff"></div>
<div class="a" style="left:445px;top:42px;width:1px;height:23px;background:#808080"></div>
<div class="a" style="left:446px;top:42px;width:1px;height:23px;background:#fff"></div>
<div class="a" style="left:476px;top:42px;width:1px;height:23px;background:#808080"></div>
<div class="a" style="left:477px;top:42px;width:1px;height:23px;background:#fff"></div>
<div class="a" style="left:553px;top:42px;width:1px;height:23px;background:#808080"></div>
<div class="a" style="left:554px;top:42px;width:1px;height:23px;background:#fff"></div>
<div class="a" style="left:607px;top:42px;width:1px;height:23px;background:#808080"></div>
<div class="a" style="left:608px;top:42px;width:1px;height:23px;background:#fff"></div>
<div class="a" style="left:684px;top:42px;width:1px;height:23px;background:#808080"></div>
<div class="a" style="left:685px;top:42px;width:1px;height:23px;background:#fff"></div>
<svg style="left:315px;top:46px" width="16" height="16" shape-rendering="crispEdges" ><path d="M4.5 0.5h7l4 4v7l-4 4h-7l-4-4v-7z" fill="#fff" stroke="#808080" shape-rendering="auto"/><path d="M5 2h6l3 3v6l-3 3h-6l-3-3v-6z" fill="#808080" shape-rendering="auto"/></svg>
<svg style="left:346px;top:47px" width="17" height="14" shape-rendering="crispEdges" ><rect x="0" y="0" width="12" height="13" fill="#808080"/><rect x="1" y="1" width="10" height="11" fill="#fff"/><rect x="2" y="3" width="6" height="1" fill="#808080"/><rect x="2" y="5" width="2" height="1" fill="#808080"/><rect x="5" y="5" width="3" height="3" fill="#808080"/><rect x="2" y="7" width="2" height="1" fill="#808080"/><rect x="2" y="9" width="8" height="1" fill="#808080"/><path d="M9 10l6-7" stroke="#808080" stroke-width="2.5" shape-rendering="auto"/></svg>
<svg style="left:379px;top:45px" width="16" height="16" shape-rendering="crispEdges" ><rect x="0" y="1" width="13" height="15" fill="#000"/><rect x="1" y="2" width="11" height="13" fill="#fff"/><rect x="0" y="15" width="14" height="1" fill="#000"/><rect x="2" y="4" width="2" height="1" fill="#808080"/><rect x="2" y="6" width="2" height="1" fill="#808080"/><rect x="2" y="8" width="2" height="1" fill="#808080"/><rect x="2" y="10" width="2" height="1" fill="#808080"/><rect x="2" y="12" width="2" height="1" fill="#808080"/><rect x="5" y="5" width="5" height="1" fill="#c0c0c0"/><rect x="5" y="7" width="5" height="1" fill="#c0c0c0"/><path d="M5 13l6-5v5z" fill="#000080" shape-rendering="auto"/><path d="M8 0h7l-3.5 4z" fill="#00a040" shape-rendering="auto"/></svg>
<svg style="left:401px;top:46px" width="16" height="14" shape-rendering="crispEdges" ><path d="M1 2h5l1 1h3v9h-9z" fill="#ffff80" stroke="#000" shape-rendering="auto"/><path d="M3.5 6.5h11l-4 6h-10z" fill="#808000" stroke="#000" shape-rendering="auto"/><path d="M9 2.5q3-2 5 1" stroke="#000" fill="none" shape-rendering="auto"/><path d="M12 3h3v-2.5z" fill="#000" shape-rendering="auto"/></svg>
<svg style="left:425px;top:47px" width="14" height="14" shape-rendering="crispEdges" ><rect x="0" y="0" width="14" height="13" fill="#000"/><rect x="1" y="1" width="12" height="11" fill="#808000"/><rect x="3" y="1" width="8" height="5" fill="#e8e8e0"/><rect x="3" y="8" width="8" height="4" fill="#000"/><rect x="4" y="9" width="2" height="2" fill="#c0c0c0"/><rect x="8" y="9" width="2" height="3" fill="#fff"/></svg>
<svg style="left:454px;top:45px" width="17" height="15" shape-rendering="crispEdges" ><path d="M5 0.5h8.5l-1 5h-9z" fill="#fff" stroke="#000" shape-rendering="auto"/><rect x="6" y="2" width="5" height="1" fill="#2040c0"/><rect x="5" y="4" width="5" height="1" fill="#2040c0"/><rect x="1" y="6" width="15" height="1" fill="#000"/><rect x="0" y="7" width="1" height="7" fill="#000"/><rect x="16" y="7" width="1" height="7" fill="#000"/><rect x="1" y="14" width="15" height="1" fill="#000"/><rect x="1" y="7" width="15" height="7" fill="#fff"/><rect x="1" y="9" width="15" height="1" fill="#000"/><rect x="1" y="12" width="15" height="1" fill="#000"/><rect x="2" y="10" width="6" height="2" fill="#e0e0e0"/><rect x="8" y="10" width="4" height="2" fill="#40c060"/><rect x="13" y="7" width="3" height="7" fill="#c0c0c0"/></svg>
<svg style="left:487px;top:46px" width="11" height="15" shape-rendering="crispEdges" ><path d="M2.5 0.5l5 9 M7.5 0.5l-5 9" stroke="#000080" stroke-width="1.4" shape-rendering="auto"/><ellipse cx="2.5" cy="12" rx="1.9" ry="2.4" fill="none" stroke="#000080" stroke-width="1.3" shape-rendering="auto"/><ellipse cx="7.8" cy="11.5" rx="1.9" ry="2.4" fill="none" stroke="#000080" stroke-width="1.3" shape-rendering="auto"/></svg>
<svg style="left:508px;top:46px" width="16" height="13" shape-rendering="crispEdges" ><rect x="0" y="0" width="8" height="10" fill="#000080"/><rect x="1" y="1" width="6" height="8" fill="#fff"/><rect x="2" y="3" width="3" height="1" fill="#000080"/><rect x="2" y="5" width="4" height="1" fill="#000080"/><rect x="6" y="3" width="9" height="10" fill="#000080"/><rect x="7" y="4" width="7" height="8" fill="#fff"/><rect x="8" y="6" width="3" height="1" fill="#000080"/><rect x="8" y="8" width="5" height="1" fill="#000080"/><rect x="8" y="10" width="5" height="1" fill="#000080"/></svg>
<svg style="left:532px;top:45px" width="17" height="15" shape-rendering="crispEdges" ><rect x="1" y="3" width="10" height="11" fill="#000"/><rect x="2" y="4" width="8" height="9" fill="#a0a040"/><rect x="3" y="2" width="5" height="2" fill="#000"/><rect x="7" y="7" width="9" height="8" fill="#000080"/><rect x="8" y="8" width="7" height="6" fill="#fff"/><rect x="9" y="10" width="3" height="1" fill="#000080"/><rect x="9" y="12" width="5" height="1" fill="#000080"/><path d="M9 0h7l-3.5 4z" fill="#00a040" shape-rendering="auto"/></svg>
<svg style="left:562px;top:45px" width="17" height="14" shape-rendering="crispEdges" ><path d="M3 4.5h9q3 0 3 3t-3 3h-8" stroke="#000080" stroke-width="2" fill="none" shape-rendering="auto"/><path d="M0 10.5l4-3.5v7z" fill="#000080" shape-rendering="auto"/><path d="M2 4.5h3" stroke="#000080" stroke-width="2"/><path d="M9 0h7l-3.5 4z" fill="#00a040" shape-rendering="auto"/></svg>
<svg style="left:586px;top:45px" width="17" height="14" shape-rendering="crispEdges" ><path d="M0 4.5h9q3 0 3 3t-3 3h-3" stroke="#a0a0a0" stroke-width="2" fill="none" shape-rendering="auto"/><path d="M0 10.5h4" stroke="#a0a0a0" stroke-width="2"/><path d="M8 10.5l-4-3.5v7z" fill="#a0a0a0" shape-rendering="auto"/><path d="M9 0h7l-3.5 4z" fill="#a0a0a0" shape-rendering="auto"/></svg>
<svg style="left:616px;top:46px" width="16" height="15" shape-rendering="crispEdges" ><path d="M8 0l1.8 5.7l6.2 1.8l-6.2 1.8l-1.8 5.7l-1.8-5.7l-6.2-1.8l6.2-1.8z" fill="#000020" shape-rendering="auto"/><path d="M10 4l3 0l-3 3z M6 11l-3 0l3-3z" fill="#fff" shape-rendering="auto"/></svg>
<svg style="left:639px;top:45px" width="17" height="16" shape-rendering="crispEdges" ><rect x="8" y="0" width="9" height="8" fill="#ffffc0"/><path d="M6 8l6-7" stroke="#000" stroke-width="1.3" shape-rendering="auto"/><path d="M10 3q2 2 0 4" stroke="#000" fill="none" shape-rendering="auto"/><rect x="0" y="9" width="4" height="1" fill="#808080"/><rect x="2" y="7" width="1" height="5" fill="#808080"/><rect x="2" y="11" width="3" height="4" fill="#000"/><rect x="7" y="11" width="3" height="4" fill="#000"/><rect x="1" y="14" width="5" height="2" fill="#000"/><rect x="6" y="14" width="5" height="2" fill="#000"/></svg>
<svg style="left:662px;top:45px" width="16" height="16" shape-rendering="crispEdges" ><rect x="0" y="0" width="9" height="12" fill="#808080"/><rect x="1" y="1" width="7" height="10" fill="#fff"/><rect x="2" y="3" width="4" height="1" fill="#c0c0c0"/><rect x="2" y="5" width="4" height="1" fill="#c0c0c0"/><circle cx="10.5" cy="10.5" r="5" fill="#2060c0" shape-rendering="auto"/><path d="M7 8q3 1 4 4q1 2 3 1M10 6q2 2 5 1" stroke="#20a040" stroke-width="1.8" fill="none" shape-rendering="auto"/></svg>
<svg style="left:693px;top:45px" width="17" height="16" shape-rendering="crispEdges" ><path d="M4 4l4.5-3.5l4.5 3.5" stroke="#000" fill="none" shape-rendering="auto"/><rect x="0" y="4" width="17" height="12" fill="#c0a000"/><rect x="1" y="5" width="15" height="10" fill="#40c0c0"/><rect x="1" y="11" width="15" height="4" fill="#40a040"/><path d="M4 15v-4l4.5-4l4.5 4v4z" fill="#c00000" shape-rendering="auto"/><rect x="7" y="11" width="3" height="4" fill="#fff"/><rect x="0" y="15" width="17" height="1" fill="#c0a000"/></svg>
<div class="a" style="left:279px;top:71px;width:1px;height:23px;background:#808080"></div>
<div class="a" style="left:280px;top:71px;width:1px;height:23px;background:#fff"></div>
<div class="a" style="left:380px;top:71px;width:1px;height:23px;background:#808080"></div>
<div class="a" style="left:381px;top:71px;width:1px;height:23px;background:#fff"></div>
<div class="a" style="left:502px;top:71px;width:1px;height:23px;background:#808080"></div>
<div class="a" style="left:503px;top:71px;width:1px;height:23px;background:#fff"></div>
<div class="a" style="left:557px;top:71px;width:1px;height:23px;background:#808080"></div>
<div class="a" style="left:558px;top:71px;width:1px;height:23px;background:#fff"></div>
<div class="a" style="left:610px;top:71px;width:1px;height:23px;background:#808080"></div>
<div class="a" style="left:611px;top:71px;width:1px;height:23px;background:#fff"></div>
<div class="t" style="left:190px;top:75px;font-family:'Liberation Serif',serif;font-weight:bold;font-size:15px;line-height:16px">N</div>
<div class="t" style="left:213px;top:75px;font-family:'Liberation Serif',serif;font-style:italic;font-size:15px;line-height:16px">C</div>
<div class="t" style="left:238px;top:75px;font-family:'Liberation Serif',serif;font-style:italic;font-size:15px;line-height:16px"><span style="text-decoration:underline;text-underline-offset:2px">S</span></div>
<div class="t" style="left:258px;top:75px;font-family:'Liberation Serif',serif;font-weight:bold;font-style:italic;font-size:14px;line-height:16px">A</div>
<div class="a" style="left:264px;top:81px;width:8px;height:8px;background:#000"></div>
<svg style="left:290px;top:78px" width="12" height="10" shape-rendering="crispEdges" ><rect x="0" y="0" width="12" height="1" fill="#000"/><rect x="0" y="2" width="9" height="1" fill="#000"/><rect x="0" y="4" width="12" height="1" fill="#000"/><rect x="0" y="6" width="9" height="1" fill="#000"/><rect x="0" y="8" width="12" height="1" fill="#000"/></svg>
<svg style="left:313px;top:78px" width="12" height="10" shape-rendering="crispEdges" ><rect x="0" y="0" width="12" height="1" fill="#000"/><rect x="2" y="2" width="8" height="1" fill="#000"/><rect x="0" y="4" width="12" height="1" fill="#000"/><rect x="2" y="6" width="8" height="1" fill="#000"/><rect x="0" y="8" width="12" height="1" fill="#000"/></svg>
<svg style="left:336px;top:78px" width="12" height="10" shape-rendering="crispEdges" ><rect x="0" y="0" width="12" height="1" fill="#000"/><rect x="3" y="2" width="9" height="1" fill="#000"/><rect x="0" y="4" width="12" height="1" fill="#000"/><rect x="3" y="6" width="9" height="1" fill="#000"/><rect x="0" y="8" width="12" height="1" fill="#000"/></svg>
<svg style="left:359px;top:78px" width="12" height="10" shape-rendering="crispEdges" ><rect x="0" y="0" width="12" height="1" fill="#000"/><rect x="0" y="2" width="12" height="1" fill="#000"/><rect x="0" y="4" width="12" height="1" fill="#000"/><rect x="0" y="6" width="12" height="1" fill="#000"/><rect x="0" y="8" width="12" height="1" fill="#000"/></svg>
<svg style="left:389px;top:77px" width="16" height="10" shape-rendering="crispEdges" ><circle cx="4" cy="6" r="1.8" fill="none" stroke="#000" shape-rendering="auto"/><circle cx="9" cy="7" r="1.8" fill="none" stroke="#000" shape-rendering="auto"/><path d="M0 6h2" stroke="#000"/><rect x="10" y="1" width="4" height="7" fill="#000"/><rect x="11" y="2" width="2" height="5" fill="#808040"/></svg>
<svg style="left:412px;top:76px" width="14" height="12" shape-rendering="crispEdges" ><circle cx="3" cy="3" r="2" fill="none" stroke="#000" stroke-width="1.6" shape-rendering="auto"/><circle cx="11" cy="9" r="2" fill="none" stroke="#000" stroke-width="1.6" shape-rendering="auto"/><path d="M11 1l-8 10" stroke="#000" stroke-width="1.8" shape-rendering="auto"/></svg>
<svg style="left:435px;top:77px" width="16" height="12" shape-rendering="crispEdges" ><text x="0" y="7" font-family="Liberation Sans" font-size="8" font-weight="bold">$</text><text x="7" y="7" font-family="Liberation Sans" font-size="8" font-weight="bold">%</text><rect x="3" y="9" width="9" height="1" fill="#000080"/><path d="M1 9.5l3-2v4z" fill="#000080" shape-rendering="auto"/></svg>
<svg style="left:459px;top:76px" width="16" height="12" shape-rendering="crispEdges" ><text x="0" y="6" font-family="Liberation Sans" font-size="7" fill="#a0a0a0">0</text><text x="0" y="12" font-family="Liberation Sans" font-size="7" font-weight="bold" letter-spacing="-0.5">.000</text><rect x="7" y="1" width="5" height="1" fill="#000080"/><rect x="11" y="1" width="1" height="4" fill="#000080"/><path d="M9.5 4h4l-2 2z" fill="#000080" shape-rendering="auto"/></svg>
<svg style="left:482px;top:77px" width="16" height="12" shape-rendering="crispEdges" ><text x="0" y="6" font-family="Liberation Sans" font-size="7" font-weight="bold" letter-spacing="-0.5">.000</text><text x="0" y="12" font-family="Liberation Sans" font-size="7" font-weight="bold">0</text><rect x="6" y="10" width="6" height="1" fill="#000080"/><rect x="11" y="7" width="1" height="4" fill="#000080"/><path d="M4 10.5l3-2v4z" fill="#000080" shape-rendering="auto"/></svg>
<svg style="left:510px;top:75px" width="18" height="13" shape-rendering="crispEdges" ><rect x="6" y="0" width="1" height="1" fill="#000"/><rect x="6" y="2" width="1" height="1" fill="#000"/><rect x="6" y="10" width="1" height="1" fill="#000"/><rect x="6" y="12" width="1" height="1" fill="#000"/><rect x="8" y="1" width="10" height="1" fill="#000"/><rect x="8" y="3" width="9" height="2" fill="#000"/><rect x="8" y="6" width="10" height="1" fill="#000"/><rect x="8" y="8" width="9" height="2" fill="#000"/><rect x="8" y="11" width="10" height="1" fill="#000"/><rect x="2" y="6" width="5" height="1" fill="#000080"/><path d="M4 3.5l-3.5 3l3.5 3z" fill="#000080" shape-rendering="auto"/></svg>
<svg style="left:533px;top:75px" width="18" height="13" shape-rendering="crispEdges" ><rect x="6" y="0" width="1" height="1" fill="#000"/><rect x="6" y="2" width="1" height="1" fill="#000"/><rect x="6" y="10" width="1" height="1" fill="#000"/><rect x="6" y="12" width="1" height="1" fill="#000"/><rect x="8" y="1" width="10" height="1" fill="#000"/><rect x="8" y="3" width="9" height="2" fill="#000"/><rect x="8" y="6" width="10" height="1" fill="#000"/><rect x="8" y="8" width="9" height="2" fill="#000"/><rect x="8" y="11" width="10" height="1" fill="#000"/><rect x="1" y="6" width="4" height="1" fill="#000080"/><path d="M3.5 3.5l3 3l-3 3z" fill="#000080" shape-rendering="auto"/></svg>
<svg style="left:566px;top:77px" width="12" height="11" shape-rendering="crispEdges" ><rect x="0" y="0" width="12" height="11" fill="#000080"/><rect x="2" y="2" width="8" height="7" fill="#d4d0c8"/></svg>
<svg style="left:590px;top:75px" width="13" height="14" shape-rendering="crispEdges" ><rect x="0" y="0" width="13" height="4" fill="#000080"/><rect x="1" y="1" width="11" height="2" fill="#c0c0ff"/><rect x="0" y="4" width="6" height="10" fill="#800080"/><rect x="1" y="5" width="4" height="8" fill="#ff80ff"/><rect x="5" y="6" width="8" height="8" fill="#000"/><rect x="6" y="7" width="6" height="6" fill="#c0ffff"/></svg>
<svg style="left:620px;top:75px" width="14" height="14" shape-rendering="crispEdges" ><rect x="0" y="0" width="1" height="14" fill="#808080"/><rect x="13" y="0" width="1" height="14" fill="#808080"/><rect x="0" y="1" width="14" height="1" fill="#808080"/><rect x="0" y="12" width="14" height="1" fill="#808080"/><rect x="1" y="2" width="12" height="10" fill="#fff"/><rect x="3" y="4" width="4" height="1" fill="#000"/><rect x="3" y="5" width="2" height="1" fill="#000"/><rect x="9" y="4" width="1" height="7" fill="#000080"/><path d="M7.5 5.5l2-2.5l2 2.5z" fill="#000080"/></svg>
<svg style="left:643px;top:75px" width="14" height="14" shape-rendering="crispEdges" ><rect x="0" y="0" width="1" height="14" fill="#808080"/><rect x="13" y="0" width="1" height="14" fill="#808080"/><rect x="0" y="1" width="14" height="1" fill="#808080"/><rect x="0" y="12" width="14" height="1" fill="#808080"/><rect x="1" y="2" width="12" height="10" fill="#fff"/><rect x="3" y="6" width="4" height="1" fill="#000"/><rect x="3" y="8" width="4" height="1" fill="#000"/><rect x="9" y="4" width="1" height="7" fill="#000080"/><path d="M7.5 5l2-2l2 2zM7.5 9l2 2l2-2z" fill="#000080"/></svg>
<svg style="left:666px;top:75px" width="14" height="14" shape-rendering="crispEdges" ><rect x="0" y="0" width="1" height="14" fill="#808080"/><rect x="13" y="0" width="1" height="14" fill="#808080"/><rect x="0" y="1" width="14" height="1" fill="#808080"/><rect x="0" y="12" width="14" height="1" fill="#808080"/><rect x="1" y="2" width="12" height="10" fill="#fff"/><rect x="3" y="9" width="4" height="1" fill="#000"/><rect x="3" y="10" width="3" height="1" fill="#000"/><rect x="9" y="3" width="1" height="7" fill="#000080"/><path d="M7.5 9l2 2.5l2-2.5z" fill="#000080"/></svg>
<svg style="left:139px;top:107px" width="14" height="10" shape-rendering="crispEdges" ><rect x="1" y="0" width="12" height="1" fill="#000"/><rect x="0" y="1" width="14" height="8" fill="#000"/><rect x="1" y="9" width="12" height="1" fill="#000"/><rect x="1" y="1" width="12" height="2" fill="#fff"/><rect x="2" y="4" width="10" height="3" fill="#e0e0e0"/><rect x="4" y="4" width="1" height="3" fill="#404040"/><rect x="7" y="4" width="1" height="3" fill="#404040"/><rect x="10" y="4" width="1" height="3" fill="#404040"/><rect x="1" y="7" width="12" height="1" fill="#a0a0a0"/></svg>
<div class="t" style="left:163px;top:104px;font-family:'Liberation Serif',serif;font-weight:bold;font-size:15px;line-height:16px">&Sigma;</div>
<svg style="left:187px;top:109px" width="10" height="5" shape-rendering="crispEdges" ><rect x="0" y="0" width="10" height="1" fill="#000"/><rect x="0" y="1" width="10" height="1" fill="#707070"/><rect x="0" y="3" width="10" height="1" fill="#000"/><rect x="0" y="4" width="10" height="1" fill="#707070"/></svg>
<div class="a" style="left:3px;top:248px;width:24px;height:1px;background:#808080"></div>
<div class="a" style="left:3px;top:249px;width:24px;height:1px;background:#fff"></div>
<div class="a" style="left:3px;top:394px;width:24px;height:1px;background:#808080"></div>
<div class="a" style="left:3px;top:395px;width:24px;height:1px;background:#fff"></div>
<div class="a" style="left:3px;top:471px;width:24px;height:1px;background:#808080"></div>
<div class="a" style="left:3px;top:472px;width:24px;height:1px;background:#fff"></div>
<svg style="left:8px;top:134px" width="16" height="15" shape-rendering="crispEdges" ><rect x="0" y="5" width="6" height="6" fill="#000"/><rect x="1" y="6" width="5" height="5" fill="#a060a0"/><circle cx="9" cy="6" r="3.5" fill="#ffff80" stroke="#000" shape-rendering="auto"/><path d="M1 14l4.5-5l4.5 5z" fill="#40c0c0" stroke="#000" shape-rendering="auto"/><path d="M11 0v7l4 -3.5z" fill="#00a040" shape-rendering="auto"/></svg>
<svg style="left:8px;top:157px" width="16" height="15" shape-rendering="crispEdges" ><rect x="0" y="2" width="13" height="13" fill="#000"/><rect x="1" y="3" width="3" height="2" fill="#fff"/><rect x="5" y="3" width="3" height="2" fill="#fff"/><rect x="9" y="3" width="3" height="2" fill="#fff"/><rect x="1" y="6" width="3" height="5" fill="#fff"/><rect x="9" y="6" width="3" height="5" fill="#fff"/><rect x="5" y="6" width="3" height="5" fill="#e0e080"/><rect x="1" y="12" width="3" height="2" fill="#fff"/><rect x="5" y="12" width="3" height="2" fill="#fff"/><rect x="9" y="12" width="3" height="2" fill="#fff"/><path d="M11 0v7l4 -3.5z" fill="#00a040" shape-rendering="auto"/></svg>
<svg style="left:7px;top:180px" width="16" height="16" shape-rendering="crispEdges" ><circle cx="6.5" cy="10" r="5.5" fill="#ffff80" stroke="#000" shape-rendering="auto"/><path d="M6.5 10v-5.5a5.5 5.5 0 0 1 5.5 5.5z" fill="#40c0c0" stroke="#000" shape-rendering="auto"/><path d="M6.5 10h5.5a5.5 5.5 0 0 1 -9.5 4z" fill="#a060a0" stroke="#000" shape-rendering="auto"/><path d="M12 0v7l4 -3.5z" fill="#00a040" shape-rendering="auto"/><rect x="13" y="9" width="2" height="1" fill="#000"/></svg>
<svg style="left:8px;top:203px" width="16" height="16" shape-rendering="crispEdges" ><rect x="0" y="7" width="8" height="1" fill="#000"/><rect x="0" y="7" width="1" height="8" fill="#000"/><rect x="1" y="8" width="7" height="7" fill="#fff"/><path d="M3.5 14.5l8.5-8" stroke="#000080" stroke-width="3" shape-rendering="auto"/><path d="M5 12l6-6" stroke="#a0a0ff" stroke-width="0.8" stroke-dasharray="1 1" shape-rendering="auto"/><path d="M11 0v7l4 -3.5z" fill="#00a040" shape-rendering="auto"/></svg>
<svg style="left:9px;top:226px" width="16" height="16" shape-rendering="crispEdges" ><rect x="0" y="2" width="11" height="2" fill="#000"/><rect x="0" y="2" width="1" height="13" fill="#000"/><rect x="0" y="14" width="12" height="1" fill="#000"/><rect x="11" y="7" width="1" height="8" fill="#000"/><rect x="1" y="4" width="10" height="10" fill="#fff"/><rect x="2" y="6" width="2" height="1" fill="#000"/><rect x="6" y="5" width="4" height="1" fill="#000"/><rect x="6" y="5" width="1" height="3" fill="#000"/><rect x="6" y="7" width="4" height="1" fill="#000"/><rect x="2" y="8" width="3" height="1" fill="#000"/><rect x="2" y="10" width="8" height="1" fill="#000"/><rect x="2" y="12" width="2" height="1" fill="#000"/><rect x="5" y="12" width="5" height="1" fill="#000"/><path d="M11 0v7l4 -3.5z" fill="#00a040" shape-rendering="auto"/></svg>
<svg style="left:7px;top:259px" width="17" height="13" shape-rendering="crispEdges" ><rect x="0" y="1" width="10" height="12" fill="#a0a0a0"/><rect x="1" y="2" width="8" height="10" fill="#fff"/><rect x="2" y="3" width="6" height="1" fill="#c0c0c0"/><rect x="2" y="5" width="6" height="1" fill="#c0c0c0"/><rect x="2" y="7" width="6" height="1" fill="#c0c0c0"/><rect x="2" y="9" width="6" height="1" fill="#c0c0c0"/><rect x="2" y="11" width="6" height="1" fill="#c0c0c0"/><rect x="13" y="0" width="1" height="7" fill="#a0a0a0"/><rect x="10" y="3" width="7" height="1" fill="#a0a0a0"/></svg>
<svg style="left:7px;top:280px" width="17" height="16" shape-rendering="crispEdges" ><rect x="0" y="3" width="14" height="13" fill="#000030"/><rect x="2" y="5" width="11" height="9" fill="#fff"/><rect x="7" y="10" width="6" height="4" fill="#ffffc0"/><rect x="7" y="5" width="1" height="9" fill="#c0c0a0"/><path d="M4 13v-5q0-2 3-2" stroke="#000090" stroke-width="2" fill="none" shape-rendering="auto"/><path d="M9.5 6.5l4-4l4 4l-4 4z" fill="#b0a0b0" stroke="#000" shape-rendering="auto"/><path d="M12 0.5l2 2" stroke="#000" stroke-width="1.3" shape-rendering="auto"/></svg>
<svg style="left:7px;top:304px" width="16" height="14" shape-rendering="crispEdges" ><text x="0" y="6" font-family="Liberation Sans" font-size="7" font-weight="bold" letter-spacing="-0.3">ABC</text><path d="M1 8l4 4l9-6" stroke="#000080" stroke-width="2" fill="none" shape-rendering="auto"/></svg>
<svg style="left:7px;top:329px" width="16" height="12" shape-rendering="crispEdges" ><text x="0" y="6" font-family="Liberation Sans" font-size="7" font-weight="bold" letter-spacing="-0.3">ABC</text><path d="M0 10q2-3 4 0t4 0t4 0t3 -1" stroke="#e02020" stroke-width="1" fill="none" shape-rendering="auto"/></svg>
<svg style="left:8px;top:352px" width="14" height="11" shape-rendering="crispEdges" ><rect x="2" y="0" width="3" height="3" fill="#000"/><rect x="9" y="0" width="3" height="3" fill="#000"/><rect x="1" y="3" width="5" height="8" fill="#000"/><rect x="8" y="3" width="5" height="8" fill="#000"/><rect x="0" y="5" width="14" height="4" fill="#000"/><rect x="2" y="6" width="1" height="3" fill="#fff"/><rect x="9" y="6" width="1" height="3" fill="#fff"/></svg>
<svg style="left:7px;top:375px" width="16" height="13" shape-rendering="crispEdges" ><rect x="0" y="0" width="15" height="13" fill="#000"/><rect x="1" y="1" width="13" height="11" fill="#fff"/><rect x="4" y="1" width="1" height="11" fill="#000"/><rect x="1" y="2" width="13" height="1" fill="#000"/><rect x="2" y="4" width="1" height="1" fill="#000"/><rect x="2" y="6" width="1" height="1" fill="#000"/><rect x="2" y="8" width="1" height="1" fill="#000"/><rect x="2" y="10" width="1" height="1" fill="#000"/><rect x="6" y="4" width="7" height="1" fill="#c0c0c0"/><rect x="6" y="6" width="7" height="1" fill="#c0c0c0"/><rect x="6" y="8" width="7" height="1" fill="#c0c0c0"/><rect x="6" y="10" width="7" height="1" fill="#c0c0c0"/></svg>
<svg style="left:7px;top:404px" width="16" height="15" shape-rendering="crispEdges" ><path d="M0 8h12l-4 4v3h-4v-3z" fill="#000" shape-rendering="auto"/><path d="M2 9h8l-3 3h-2z" fill="#fff" shape-rendering="auto"/><path d="M3 9.5h6" stroke="#c0c0a0"/><rect x="5" y="13" width="2" height="1" fill="#fff"/><path d="M12.5 3.5h6M15.5 0.5v6" stroke="#909090" stroke-width="1.5" shape-rendering="auto"/><path d="M13.5 1.5l4 4M17.5 1.5l-4 4" stroke="#b0b0b0" shape-rendering="auto"/></svg>
<svg style="left:7px;top:427px" width="17" height="15" shape-rendering="crispEdges" ><path d="M0.5 7L4 0.5L7.5 7M2 5h4" stroke="#000080" stroke-width="2" fill="none" shape-rendering="auto"/><path d="M3 9l3.5 3" stroke="#000080" stroke-width="1.2" shape-rendering="auto"/><path d="M7.5 13h-3.5l3-3z" fill="#000080" shape-rendering="auto"/><path d="M9 9.9h6.5L9.5 14.1h6.5" stroke="#000" stroke-width="1.8" fill="none" shape-rendering="auto"/></svg>
<svg style="left:7px;top:450px" width="17" height="15" shape-rendering="crispEdges" ><path d="M0 0.9h6.5L0.5 5.1h6.5" stroke="#000080" stroke-width="1.8" fill="none" shape-rendering="auto"/><path d="M3 9l3.5 3" stroke="#000080" stroke-width="1.2" shape-rendering="auto"/><path d="M7.5 13h-3.5l3-3z" fill="#000080" shape-rendering="auto"/><path d="M8.5 14.5L12 8.0L15.5 14.5M10 12.5h4" stroke="#000" stroke-width="2" fill="none" shape-rendering="auto"/></svg>
<svg style="left:8px;top:482px" width="14" height="13" shape-rendering="crispEdges" ><rect x="0" y="0" width="6" height="5" fill="#000"/><rect x="1" y="1" width="4" height="3" fill="#fff"/><rect x="7" y="0" width="7" height="5" fill="#000"/><rect x="8" y="1" width="5" height="3" fill="#fff"/><rect x="0" y="6" width="7" height="7" fill="#000"/><rect x="1" y="7" width="5" height="2" fill="#fff"/><rect x="1" y="10" width="5" height="2" fill="#fff"/></svg>
<svg style="left:7px;top:505px" width="16" height="15" shape-rendering="crispEdges" ><rect x="0" y="0" width="6" height="5" fill="#a0a0a0"/><rect x="1" y="1" width="4" height="3" fill="#fff"/><rect x="7" y="0" width="7" height="5" fill="#a0a0a0"/><rect x="8" y="1" width="5" height="3" fill="#fff"/><rect x="0" y="6" width="8" height="8" fill="#a0a0a0"/><rect x="1" y="7" width="6" height="2" fill="#fff"/><rect x="1" y="10" width="6" height="2" fill="#fff"/><path d="M9 8l6 6M15 8l-6 6" stroke="#a0a0a0" stroke-width="2" shape-rendering="auto"/></svg>
<svg style="left:31px;top:704px" width="15" height="14" shape-rendering="crispEdges" ><path d="M11 3v8l-5-4z" fill="#808080"/><rect x="4" y="3" width="2" height="8" fill="#808080"/></svg>
<svg style="left:47px;top:704px" width="15" height="14" shape-rendering="crispEdges" ><path d="M10 3v8l-5-4z" fill="#808080"/></svg>
<svg style="left:63px;top:704px" width="15" height="14" shape-rendering="crispEdges" ><path d="M5 3v8l5-4z" fill="#808080"/><path d="M5 11l5-4" stroke="#fff" shape-rendering="auto"/></svg>
<svg style="left:79px;top:704px" width="15" height="14" shape-rendering="crispEdges" ><path d="M5 3v8l5-4z" fill="#808080"/><path d="M5 11l5-4" stroke="#fff" shape-rendering="auto"/><rect x="11" y="3" width="2" height="8" fill="#808080"/></svg>
<svg style="left:0px;top:703px" width="300" height="16" shape-rendering="crispEdges" ><path d="M166 0.5L173 14.5H202L209 0.5" fill="#d4d0c8" stroke="#404040" shape-rendering="auto"/><path d="M131 0.5L138 14.5H167L174 0.5" fill="#d4d0c8" stroke="#404040" shape-rendering="auto"/><path d="M95 0L102 14.5H132L139 0" fill="#fff" stroke="#404040" shape-rendering="auto"/><rect x="96" y="-1" width="42" height="2" fill="#fff"/></svg>
<div class="t" style="left:104px;top:705px;font-weight:bold">Full1</div>
<div class="t" style="left:140px;top:705px;">Full2</div>
<div class="t" style="left:175px;top:705px;">Full3</div>
<svg style="left:1011px;top:650px" width="13" height="25" shape-rendering="crispEdges" ><defs><radialGradient id="gl" cx="0.7" cy="0.3" r="0.9"><stop offset="0" stop-color="#40a0ff"/><stop offset="1" stop-color="#0010a0"/></radialGradient></defs><ellipse cx="13" cy="12.5" rx="12" ry="12" fill="url(#gl)" shape-rendering="auto"/><path d="M5 6q4 0 6 4t3 4M7 3q3 1 6 1" stroke="#30c040" stroke-width="3.5" fill="none" shape-rendering="auto"/></svg></body></html>
